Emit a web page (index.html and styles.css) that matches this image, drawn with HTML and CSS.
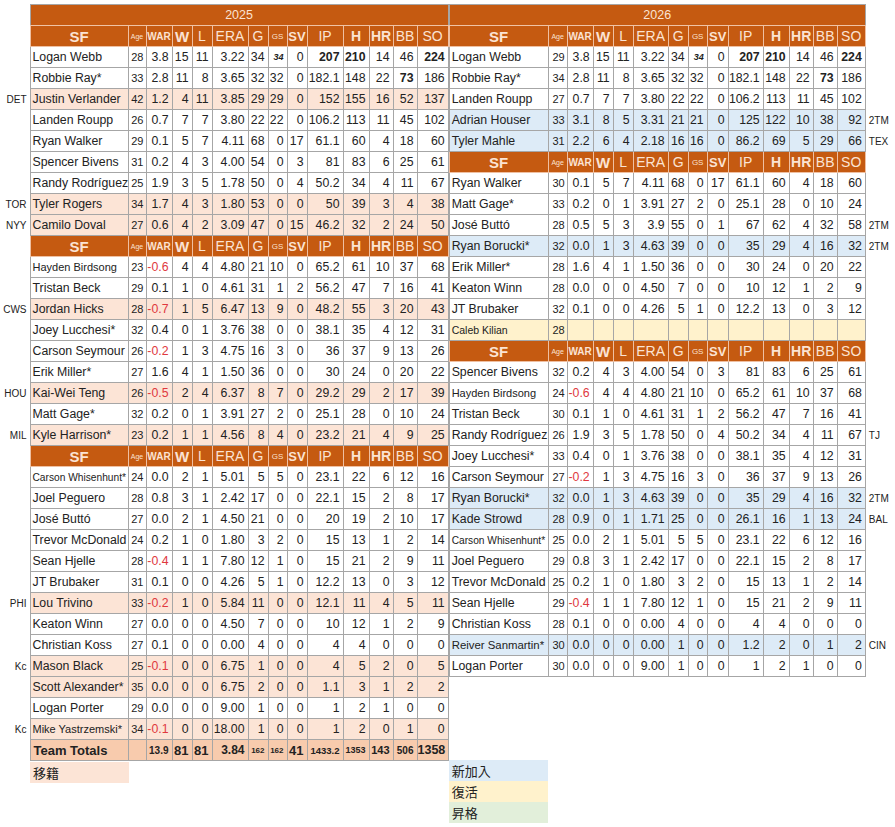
FILE: index.html
```html
<!DOCTYPE html>
<html lang="ja">
<head>
<meta charset="utf-8">
<title>SF Pitching 2025 / 2026</title>
<link rel="stylesheet" href="styles.css">
</head>
<body>
<div class="sheet">
  <div class="side">
    <table class="grid left">
      <colgroup><col style="width:30px"><col style="width:98px"><col style="width:18px"><col style="width:26px"><col style="width:20px"><col style="width:20px"><col style="width:36px"><col style="width:20px"><col style="width:19px"><col style="width:20px"><col style="width:36px"><col style="width:26px"><col style="width:24px"><col style="width:24px"><col style="width:31px"></colgroup>
      <tr class="title"><td class="t"></td><td colspan="14">2025</td></tr>
      <tr class="h"><td class="t"></td><th class="sf">SF</th><th class="ag">Age</th><th class="wr">WAR</th><th class="bd w">W</th><th>L</th><th>ERA</th><th>G</th><th class="gs">GS</th><th class="sv">SV</th><th>IP</th><th class="bd">H</th><th class="bd">HR</th><th>BB</th><th>SO</th></tr>
      <tr><td class="t"></td><td class="n">Logan Webb</td><td class="a">28</td><td>3.8</td><td>15</td><td>11</td><td>3.22</td><td>34</td><td class="s">34</td><td>0</td><td class="b">207</td><td class="b">210</td><td>14</td><td>46</td><td class="b">224</td></tr>
      <tr><td class="t"></td><td class="n">Robbie Ray*</td><td class="a">33</td><td>2.8</td><td>11</td><td>8</td><td>3.65</td><td>32</td><td>32</td><td>0</td><td>182.1</td><td>148</td><td>22</td><td class="b">73</td><td>186</td></tr>
      <tr class="p"><td class="t">DET</td><td class="n">Justin Verlander</td><td class="a">42</td><td>1.2</td><td>4</td><td>11</td><td>3.85</td><td>29</td><td>29</td><td>0</td><td>152</td><td>155</td><td>16</td><td>52</td><td>137</td></tr>
      <tr><td class="t"></td><td class="n">Landen Roupp</td><td class="a">26</td><td>0.7</td><td>7</td><td>7</td><td>3.80</td><td>22</td><td>22</td><td>0</td><td>106.2</td><td>113</td><td>11</td><td>45</td><td>102</td></tr>
      <tr><td class="t"></td><td class="n">Ryan Walker</td><td class="a">29</td><td>0.1</td><td>5</td><td>7</td><td>4.11</td><td>68</td><td>0</td><td>17</td><td>61.1</td><td>60</td><td>4</td><td>18</td><td>60</td></tr>
      <tr><td class="t"></td><td class="n">Spencer Bivens</td><td class="a">31</td><td>0.2</td><td>4</td><td>3</td><td>4.00</td><td>54</td><td>0</td><td>3</td><td>81</td><td>83</td><td>6</td><td>25</td><td>61</td></tr>
      <tr><td class="t"></td><td class="n">Randy Rodríguez</td><td class="a">25</td><td>1.9</td><td>3</td><td>5</td><td>1.78</td><td>50</td><td>0</td><td>4</td><td>50.2</td><td>34</td><td>4</td><td>11</td><td>67</td></tr>
      <tr class="p"><td class="t">TOR</td><td class="n">Tyler Rogers</td><td class="a">34</td><td>1.7</td><td>4</td><td>3</td><td>1.80</td><td>53</td><td>0</td><td>0</td><td>50</td><td>39</td><td>3</td><td>4</td><td>38</td></tr>
      <tr class="p"><td class="t">NYY</td><td class="n">Camilo Doval</td><td class="a">27</td><td>0.6</td><td>4</td><td>2</td><td>3.09</td><td>47</td><td>0</td><td>15</td><td>46.2</td><td>32</td><td>2</td><td>24</td><td>50</td></tr>
      <tr class="h"><td class="t"></td><th class="sf">SF</th><th class="ag">Age</th><th class="wr">WAR</th><th class="bd w">W</th><th>L</th><th>ERA</th><th>G</th><th class="gs">GS</th><th class="sv">SV</th><th>IP</th><th class="bd">H</th><th class="bd">HR</th><th>BB</th><th>SO</th></tr>
      <tr><td class="t"></td><td class="n sm11">Hayden Birdsong</td><td class="a">23</td><td class="neg">-0.6</td><td>4</td><td>4</td><td>4.80</td><td>21</td><td>10</td><td>0</td><td>65.2</td><td>61</td><td>10</td><td>37</td><td>68</td></tr>
      <tr><td class="t"></td><td class="n">Tristan Beck</td><td class="a">29</td><td>0.1</td><td>1</td><td>0</td><td>4.61</td><td>31</td><td>1</td><td>2</td><td>56.2</td><td>47</td><td>7</td><td>16</td><td>41</td></tr>
      <tr class="p"><td class="t">CWS</td><td class="n">Jordan Hicks</td><td class="a">28</td><td class="neg">-0.7</td><td>1</td><td>5</td><td>6.47</td><td>13</td><td>9</td><td>0</td><td>48.2</td><td>55</td><td>3</td><td>20</td><td>43</td></tr>
      <tr><td class="t"></td><td class="n">Joey Lucchesi*</td><td class="a">32</td><td>0.4</td><td>0</td><td>1</td><td>3.76</td><td>38</td><td>0</td><td>0</td><td>38.1</td><td>35</td><td>4</td><td>12</td><td>31</td></tr>
      <tr><td class="t"></td><td class="n">Carson Seymour</td><td class="a">26</td><td class="neg">-0.2</td><td>1</td><td>3</td><td>4.75</td><td>16</td><td>3</td><td>0</td><td>36</td><td>37</td><td>9</td><td>13</td><td>26</td></tr>
      <tr><td class="t"></td><td class="n">Erik Miller*</td><td class="a">27</td><td>1.6</td><td>4</td><td>1</td><td>1.50</td><td>36</td><td>0</td><td>0</td><td>30</td><td>24</td><td>0</td><td>20</td><td>22</td></tr>
      <tr class="p"><td class="t">HOU</td><td class="n">Kai-Wei Teng</td><td class="a">26</td><td class="neg">-0.5</td><td>2</td><td>4</td><td>6.37</td><td>8</td><td>7</td><td>0</td><td>29.2</td><td>29</td><td>2</td><td>17</td><td>39</td></tr>
      <tr><td class="t"></td><td class="n">Matt Gage*</td><td class="a">32</td><td>0.2</td><td>0</td><td>1</td><td>3.91</td><td>27</td><td>2</td><td>0</td><td>25.1</td><td>28</td><td>0</td><td>10</td><td>24</td></tr>
      <tr class="p"><td class="t">MIL</td><td class="n">Kyle Harrison*</td><td class="a">23</td><td>0.2</td><td>1</td><td>1</td><td>4.56</td><td>8</td><td>4</td><td>0</td><td>23.2</td><td>21</td><td>4</td><td>9</td><td>25</td></tr>
      <tr class="h"><td class="t"></td><th class="sf">SF</th><th class="ag">Age</th><th class="wr">WAR</th><th class="bd w">W</th><th>L</th><th>ERA</th><th>G</th><th class="gs">GS</th><th class="sv">SV</th><th>IP</th><th class="bd">H</th><th class="bd">HR</th><th>BB</th><th>SO</th></tr>
      <tr><td class="t"></td><td class="n sm10">Carson Whisenhunt*</td><td class="a">24</td><td>0.0</td><td>2</td><td>1</td><td>5.01</td><td>5</td><td>5</td><td>0</td><td>23.1</td><td>22</td><td>6</td><td>12</td><td>16</td></tr>
      <tr><td class="t"></td><td class="n">Joel Peguero</td><td class="a">28</td><td>0.8</td><td>3</td><td>1</td><td>2.42</td><td>17</td><td>0</td><td>0</td><td>22.1</td><td>15</td><td>2</td><td>8</td><td>17</td></tr>
      <tr><td class="t"></td><td class="n">José Buttó</td><td class="a">27</td><td>0.0</td><td>2</td><td>1</td><td>4.50</td><td>21</td><td>0</td><td>0</td><td>20</td><td>19</td><td>2</td><td>10</td><td>17</td></tr>
      <tr><td class="t"></td><td class="n">Trevor McDonald</td><td class="a">24</td><td>0.2</td><td>1</td><td>0</td><td>1.80</td><td>3</td><td>2</td><td>0</td><td>15</td><td>13</td><td>1</td><td>2</td><td>14</td></tr>
      <tr><td class="t"></td><td class="n">Sean Hjelle</td><td class="a">28</td><td class="neg">-0.4</td><td>1</td><td>1</td><td>7.80</td><td>12</td><td>1</td><td>0</td><td>15</td><td>21</td><td>2</td><td>9</td><td>11</td></tr>
      <tr><td class="t"></td><td class="n">JT Brubaker</td><td class="a">31</td><td>0.1</td><td>0</td><td>0</td><td>4.26</td><td>5</td><td>1</td><td>0</td><td>12.2</td><td>13</td><td>0</td><td>3</td><td>12</td></tr>
      <tr class="p"><td class="t">PHI</td><td class="n">Lou Trivino</td><td class="a">33</td><td class="neg">-0.2</td><td>1</td><td>0</td><td>5.84</td><td>11</td><td>0</td><td>0</td><td>12.1</td><td>11</td><td>4</td><td>5</td><td>11</td></tr>
      <tr><td class="t"></td><td class="n">Keaton Winn</td><td class="a">27</td><td>0.0</td><td>0</td><td>0</td><td>4.50</td><td>7</td><td>0</td><td>0</td><td>10</td><td>12</td><td>1</td><td>2</td><td>9</td></tr>
      <tr><td class="t"></td><td class="n">Christian Koss</td><td class="a">27</td><td>0.1</td><td>0</td><td>0</td><td>0.00</td><td>4</td><td>0</td><td>0</td><td>4</td><td>4</td><td>0</td><td>0</td><td>0</td></tr>
      <tr class="p"><td class="t">Kc</td><td class="n">Mason Black</td><td class="a">25</td><td class="neg">-0.1</td><td>0</td><td>0</td><td>6.75</td><td>1</td><td>0</td><td>0</td><td>4</td><td>5</td><td>2</td><td>0</td><td>5</td></tr>
      <tr class="p"><td class="t"></td><td class="n">Scott Alexander*</td><td class="a">35</td><td>0.0</td><td>0</td><td>0</td><td>6.75</td><td>2</td><td>0</td><td>0</td><td>1.1</td><td>3</td><td>1</td><td>2</td><td>2</td></tr>
      <tr><td class="t"></td><td class="n">Logan Porter</td><td class="a">29</td><td>0.0</td><td>0</td><td>0</td><td>9.00</td><td>1</td><td>0</td><td>0</td><td>1</td><td>2</td><td>1</td><td>0</td><td>0</td></tr>
      <tr class="p"><td class="t">Kc</td><td class="n sm11">Mike Yastrzemski*</td><td class="a">34</td><td class="neg">-0.1</td><td>0</td><td>0</td><td>18.00</td><td>1</td><td>0</td><td>0</td><td>1</td><td>2</td><td>0</td><td>1</td><td>0</td></tr>
      <tr class="tot"><td class="t"></td><td class="n">Team Totals</td><td></td><td class="f10">13.9</td><td>81</td><td>81</td><td class="f12">3.84</td><td class="f8">162</td><td class="f8">162</td><td>41</td><td class="f95">1433.2</td><td class="f9">1353</td><td class="f11">143</td><td class="f10">506</td><td class="f125">1358</td></tr>
    </table>
    <div class="legend pink left-legend">移籍</div>
  </div>

  <div class="side">
    <table class="grid right">
      <colgroup><col style="width:99px"><col style="width:19px"><col style="width:26px"><col style="width:20px"><col style="width:20px"><col style="width:35px"><col style="width:20px"><col style="width:19px"><col style="width:21px"><col style="width:35px"><col style="width:26px"><col style="width:24px"><col style="width:24px"><col style="width:28px"><col style="width:30px"></colgroup>
      <tr class="title"><td colspan="14">2026</td><td class="t r"></td></tr>
      <tr class="h"><th class="sf">SF</th><th class="ag">Age</th><th class="wr">WAR</th><th class="bd w">W</th><th>L</th><th>ERA</th><th>G</th><th class="gs">GS</th><th class="sv">SV</th><th>IP</th><th class="bd">H</th><th class="bd">HR</th><th>BB</th><th>SO</th><td class="t r"></td></tr>
      <tr><td class="n">Logan Webb</td><td class="a">29</td><td>3.8</td><td>15</td><td>11</td><td>3.22</td><td>34</td><td class="s">34</td><td>0</td><td class="b">207</td><td class="b">210</td><td>14</td><td>46</td><td class="b">224</td><td class="t r"></td></tr>
      <tr><td class="n">Robbie Ray*</td><td class="a">34</td><td>2.8</td><td>11</td><td>8</td><td>3.65</td><td>32</td><td>32</td><td>0</td><td>182.1</td><td>148</td><td>22</td><td class="b">73</td><td>186</td><td class="t r"></td></tr>
      <tr><td class="n">Landen Roupp</td><td class="a">27</td><td>0.7</td><td>7</td><td>7</td><td>3.80</td><td>22</td><td>22</td><td>0</td><td>106.2</td><td>113</td><td>11</td><td>45</td><td>102</td><td class="t r"></td></tr>
      <tr class="bl"><td class="n">Adrian Houser</td><td class="a">33</td><td>3.1</td><td>8</td><td>5</td><td>3.31</td><td>21</td><td>21</td><td>0</td><td>125</td><td>122</td><td>10</td><td>38</td><td>92</td><td class="t r">2TM</td></tr>
      <tr class="bl"><td class="n">Tyler Mahle</td><td class="a">31</td><td>2.2</td><td>6</td><td>4</td><td>2.18</td><td>16</td><td>16</td><td>0</td><td>86.2</td><td>69</td><td>5</td><td>29</td><td>66</td><td class="t r">TEX</td></tr>
      <tr class="h"><th class="sf">SF</th><th class="ag">Age</th><th class="wr">WAR</th><th class="bd w">W</th><th>L</th><th>ERA</th><th>G</th><th class="gs">GS</th><th class="sv">SV</th><th>IP</th><th class="bd">H</th><th class="bd">HR</th><th>BB</th><th>SO</th><td class="t r"></td></tr>
      <tr><td class="n">Ryan Walker</td><td class="a">30</td><td>0.1</td><td>5</td><td>7</td><td>4.11</td><td>68</td><td>0</td><td>17</td><td>61.1</td><td>60</td><td>4</td><td>18</td><td>60</td><td class="t r"></td></tr>
      <tr><td class="n">Matt Gage*</td><td class="a">33</td><td>0.2</td><td>0</td><td>1</td><td>3.91</td><td>27</td><td>2</td><td>0</td><td>25.1</td><td>28</td><td>0</td><td>10</td><td>24</td><td class="t r"></td></tr>
      <tr><td class="n">José Buttó</td><td class="a">28</td><td>0.5</td><td>5</td><td>3</td><td>3.9</td><td>55</td><td>0</td><td>1</td><td>67</td><td>62</td><td>4</td><td>32</td><td>58</td><td class="t r">2TM</td></tr>
      <tr class="bl"><td class="n">Ryan Borucki*</td><td class="a">32</td><td>0.0</td><td>1</td><td>3</td><td>4.63</td><td>39</td><td>0</td><td>0</td><td>35</td><td>29</td><td>4</td><td>16</td><td>32</td><td class="t r">2TM</td></tr>
      <tr><td class="n">Erik Miller*</td><td class="a">28</td><td>1.6</td><td>4</td><td>1</td><td>1.50</td><td>36</td><td>0</td><td>0</td><td>30</td><td>24</td><td>0</td><td>20</td><td>22</td><td class="t r"></td></tr>
      <tr><td class="n">Keaton Winn</td><td class="a">28</td><td>0.0</td><td>0</td><td>0</td><td>4.50</td><td>7</td><td>0</td><td>0</td><td>10</td><td>12</td><td>1</td><td>2</td><td>9</td><td class="t r"></td></tr>
      <tr><td class="n">JT Brubaker</td><td class="a">32</td><td>0.1</td><td>0</td><td>0</td><td>4.26</td><td>5</td><td>1</td><td>0</td><td>12.2</td><td>13</td><td>0</td><td>3</td><td>12</td><td class="t r"></td></tr>
      <tr class="y"><td class="n sm105">Caleb Kilian</td><td class="a">28</td><td></td><td></td><td></td><td></td><td></td><td></td><td></td><td></td><td></td><td></td><td></td><td></td><td class="t r"></td></tr>
      <tr class="h"><th class="sf">SF</th><th class="ag">Age</th><th class="wr">WAR</th><th class="bd w">W</th><th>L</th><th>ERA</th><th>G</th><th class="gs">GS</th><th class="sv">SV</th><th>IP</th><th class="bd">H</th><th class="bd">HR</th><th>BB</th><th>SO</th><td class="t r"></td></tr>
      <tr><td class="n">Spencer Bivens</td><td class="a">32</td><td>0.2</td><td>4</td><td>3</td><td>4.00</td><td>54</td><td>0</td><td>3</td><td>81</td><td>83</td><td>6</td><td>25</td><td>61</td><td class="t r"></td></tr>
      <tr><td class="n sm11">Hayden Birdsong</td><td class="a">24</td><td class="neg">-0.6</td><td>4</td><td>4</td><td>4.80</td><td>21</td><td>10</td><td>0</td><td>65.2</td><td>61</td><td>10</td><td>37</td><td>68</td><td class="t r"></td></tr>
      <tr><td class="n">Tristan Beck</td><td class="a">30</td><td>0.1</td><td>1</td><td>0</td><td>4.61</td><td>31</td><td>1</td><td>2</td><td>56.2</td><td>47</td><td>7</td><td>16</td><td>41</td><td class="t r"></td></tr>
      <tr><td class="n">Randy Rodríguez</td><td class="a">26</td><td>1.9</td><td>3</td><td>5</td><td>1.78</td><td>50</td><td>0</td><td>4</td><td>50.2</td><td>34</td><td>4</td><td>11</td><td>67</td><td class="t r">TJ</td></tr>
      <tr><td class="n">Joey Lucchesi*</td><td class="a">33</td><td>0.4</td><td>0</td><td>1</td><td>3.76</td><td>38</td><td>0</td><td>0</td><td>38.1</td><td>35</td><td>4</td><td>12</td><td>31</td><td class="t r"></td></tr>
      <tr><td class="n">Carson Seymour</td><td class="a">27</td><td class="neg">-0.2</td><td>1</td><td>3</td><td>4.75</td><td>16</td><td>3</td><td>0</td><td>36</td><td>37</td><td>9</td><td>13</td><td>26</td><td class="t r"></td></tr>
      <tr class="bl"><td class="n">Ryan Borucki*</td><td class="a">32</td><td>0.0</td><td>1</td><td>3</td><td>4.63</td><td>39</td><td>0</td><td>0</td><td>35</td><td>29</td><td>4</td><td>16</td><td>32</td><td class="t r">2TM</td></tr>
      <tr class="bl"><td class="n">Kade Strowd</td><td class="a">28</td><td>0.9</td><td>0</td><td>1</td><td>1.71</td><td>25</td><td>0</td><td>0</td><td>26.1</td><td>16</td><td>1</td><td>13</td><td>24</td><td class="t r">BAL</td></tr>
      <tr><td class="n sm10">Carson Whisenhunt*</td><td class="a">25</td><td>0.0</td><td>2</td><td>1</td><td>5.01</td><td>5</td><td>5</td><td>0</td><td>23.1</td><td>22</td><td>6</td><td>12</td><td>16</td><td class="t r"></td></tr>
      <tr><td class="n">Joel Peguero</td><td class="a">29</td><td>0.8</td><td>3</td><td>1</td><td>2.42</td><td>17</td><td>0</td><td>0</td><td>22.1</td><td>15</td><td>2</td><td>8</td><td>17</td><td class="t r"></td></tr>
      <tr><td class="n">Trevor McDonald</td><td class="a">25</td><td>0.2</td><td>1</td><td>0</td><td>1.80</td><td>3</td><td>2</td><td>0</td><td>15</td><td>13</td><td>1</td><td>2</td><td>14</td><td class="t r"></td></tr>
      <tr><td class="n">Sean Hjelle</td><td class="a">29</td><td class="neg">-0.4</td><td>1</td><td>1</td><td>7.80</td><td>12</td><td>1</td><td>0</td><td>15</td><td>21</td><td>2</td><td>9</td><td>11</td><td class="t r"></td></tr>
      <tr><td class="n">Christian Koss</td><td class="a">28</td><td>0.1</td><td>0</td><td>0</td><td>0.00</td><td>4</td><td>0</td><td>0</td><td>4</td><td>4</td><td>0</td><td>0</td><td>0</td><td class="t r"></td></tr>
      <tr class="bl"><td class="n sm115">Reiver Sanmartin*</td><td class="a">30</td><td>0.0</td><td>0</td><td>0</td><td>0.00</td><td>1</td><td>0</td><td>0</td><td>1.2</td><td>2</td><td>0</td><td>1</td><td>2</td><td class="t r">CIN</td></tr>
      <tr><td class="n">Logan Porter</td><td class="a">30</td><td>0.0</td><td>0</td><td>0</td><td>9.00</td><td>1</td><td>0</td><td>0</td><td>1</td><td>2</td><td>1</td><td>0</td><td>0</td><td class="t r"></td></tr>
    </table>
    <div class="legends">
      <div class="legend blue">新加入</div>
      <div class="legend yellow">復活</div>
      <div class="legend green">昇格</div>
    </div>
  </div>
</div>
</body>
</html>
```

FILE: styles.css
```css
html, body {
  margin: 0;
  padding: 0;
  background: #ffffff;
}
body {
  padding-top: 4px;
  font-family: "Liberation Sans", Arial, sans-serif;
  color: #222222;
}
.sheet {
  display: flex;
  align-items: flex-start;
}
.side {
  display: flex;
  flex-direction: column;
}
.grid {
  border-collapse: collapse;
  table-layout: fixed;
}
.grid.left { width: 448px; }
.grid.right { width: 446px; }
.grid tr { height: 21px; }
.grid td, .grid th {
  border: 1px solid #a6a6a6;
  padding: 0 3px 0 0;
  font-size: 12.3px;
  line-height: 19px;
  text-align: right;
  white-space: nowrap;
  overflow: hidden;
  font-weight: normal;
}
.grid td.t {
  border: none;
  font-size: 10px;
  color: #222;
  padding-right: 3px;
  background: #fff;
}
.grid td.t.r {
  text-align: left;
  padding: 0 0 0 3px;
}
.grid td.n {
  text-align: left;
  padding: 0 0 0 2px;
}
.grid td.a { font-size: 11px; padding-right: 2px; }
.grid td.s { font-size: 9px; font-weight: bold; font-style: italic; }
.grid td.b { font-weight: bold; }
.grid td.neg { color: #e0383e; }
.grid td.sm11 { font-size: 11px; }
.grid td.sm10 { font-size: 10.2px; }
.grid td.sm105 { font-size: 10.5px; }
.grid td.sm115 { font-size: 11.4px; }

/* title rows */
.grid tr.title td:not(.t) {
  background: #c55a11;
  color: #fbe3d3;
  text-align: center;
  font-size: 12.5px;
  padding: 0;
  border-color: #a6a6a6 #a6a6a6 #f0c3a5 #a6a6a6;
}

/* header rows */
.grid tr.h th {
  background: #c55a11;
  color: #fbe3d3;
  text-align: center;
  padding: 0;
  font-size: 14px;
  border-color: #efc0a2;
}
.grid tr.h th.sf { font-size: 15px; font-weight: bold; }
.grid tr.h th.ag { font-size: 7px; }
.grid tr.h th.wr { font-size: 10px; font-weight: bold; }
.grid tr.h th.bd { font-weight: bold; }
.grid tr.h th.w { font-size: 15px; }
.grid tr.h th.gs { font-size: 8px; }
.grid tr.h th.sv { font-size: 13px; font-weight: bold; }

/* row fills */
.grid tr.p td:not(.t) { background: #fce4d6; }
.grid tr.bl td:not(.t) { background: #ddebf7; }
.grid tr.y td:not(.t) { background: #fff2cc; }

/* totals */
.grid tr.tot td:not(.t) {
  background: #f8cbad;
  font-weight: bold;
}
.grid tr.tot td.n { font-size: 13px; padding-left: 3px; }
.grid tr.tot td:nth-child(5),
.grid tr.tot td:nth-child(6),
.grid tr.tot td:nth-child(10) { font-size: 13px; }
.grid tr.tot td.f8 { font-size: 8px; }
.grid tr.tot td.f9 { font-size: 9px; }
.grid tr.tot td.f95 { font-size: 9.5px; }
.grid tr.tot td.f10 { font-size: 10px; }
.grid tr.tot td.f11 { font-size: 11px; }
.grid tr.tot td.f12 { font-size: 12px; }
.grid tr.tot td.f125 { font-size: 12.5px; }

/* legends */
.legend {
  width: 96px;
  height: 21px;
  line-height: 21px;
  padding-left: 3px;
  font-family: "Noto Sans CJK JP", "Liberation Sans", sans-serif;
  font-size: 13px;
  color: #222;
}
.left-legend {
  margin-left: 30px;
  margin-top: 1px;
}
.legends {
  margin-top: 83px;
  display: flex;
  flex-direction: column;
}
.pink { background: #fce4d6; }
.blue { background: #ddebf7; }
.yellow { background: #fff2cc; }
.green { background: #e2efda; }
```
